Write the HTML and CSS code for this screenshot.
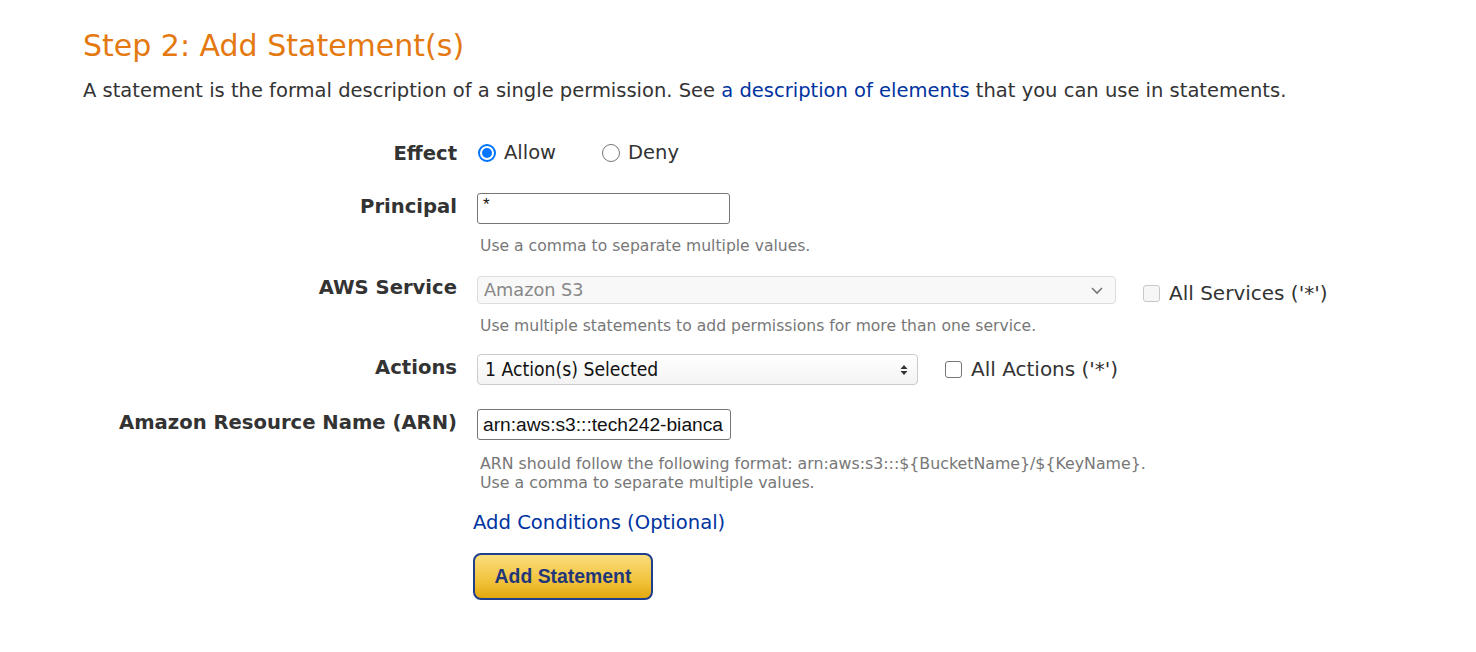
FILE: index.html
```html
<!DOCTYPE html>
<html>
<head>
<meta charset="utf-8">
<link rel="stylesheet" href="styles.css">
</head>
<body>
<div class="page">
  <h2 class="title">Step 2: Add Statement(s)</h2>
  <p class="intro">A statement is the formal description of a single permission. See <a href="#" class="link">a description of elements</a> that you can use in statements.</p>

  <div class="form">
    <div class="row row-effect">
      <div class="label label-effect h30">Effect</div>
      <div class="field">
        <div class="line h30">
          <label class="opt"><span class="radio checked"></span><span>Allow</span></label>
          <label class="opt opt-deny"><span class="radio"></span><span>Deny</span></label>
        </div>
      </div>
    </div>

    <div class="row row-principal">
      <div class="label h31">Principal</div>
      <div class="field">
        <div class="line h31"><div class="textbox tb-principal">*</div></div>
        <div class="hint hint-first">Use a comma to separate multiple values.</div>
      </div>
    </div>

    <div class="row row-service">
      <div class="label h28">AWS Service</div>
      <div class="field">
        <div class="line h28">
          <div class="select select-disabled">
            <span>Amazon S3</span>
            <svg class="chev" width="14" height="9" viewBox="0 0 14 9"><path d="M2 2 L7 7 L12 2" fill="none" stroke="#777" stroke-width="1.6"/></svg>
          </div>
          <label class="check-opt check-services"><span class="checkbox disabled"></span><span>All Services ('*')</span></label>
        </div>
        <div class="hint hint-first">Use multiple statements to add permissions for more than one service.</div>
      </div>
    </div>

    <div class="row row-actions">
      <div class="label h31">Actions</div>
      <div class="field">
        <div class="line h31">
          <div class="select select-actions">
            <span>1 Action(s) Selected</span>
            <svg class="updown" width="8" height="12" viewBox="0 0 8 12"><path d="M4 1 L7.5 5 L0.5 5 Z M4 11 L7.5 7 L0.5 7 Z" fill="#333"/></svg>
          </div>
          <label class="check-opt check-actions"><span class="checkbox"></span><span>All Actions ('*')</span></label>
        </div>
      </div>
    </div>

    <div class="row row-arn">
      <div class="label h31">Amazon Resource Name (ARN)</div>
      <div class="field">
        <div class="line h31"><div class="textbox tb-arn">arn:aws:s3:::tech242-bianca</div></div>
        <div class="hint hint-arn">ARN should follow the following format: arn:aws:s3:::${BucketName}/${KeyName}.<br>Use a comma to separate multiple values.</div>
      </div>
    </div>

    <div class="row row-cond">
      <div class="label"></div>
      <div class="field field-wide">
        <a href="#" class="link cond">Add Conditions (Optional)</a>
        <div class="btn">Add Statement</div>
      </div>
    </div>
  </div>
</div>
</body>
</html>
```

FILE: styles.css
```css
html, body {
  margin: 0;
  padding: 0;
  background: #ffffff;
}

body {
  font-family: "DejaVu Sans", Verdana, sans-serif;
  color: #333333;
}

.page {
  padding: 29px 0 0 83px;
}

.title {
  margin: 0;
  font-weight: normal;
  font-size: 30px;
  line-height: 34px;
  color: #e47911;
}

.intro {
  margin: 16px 0 0 0;
  font-size: 19.5px;
  line-height: 24px;
  color: #333333;
}

.link {
  color: #0033a0;
  text-decoration: none;
}

.form {
  margin-top: 35px;
}

.row {
  display: grid;
  grid-template-columns: 374px 1fr;
  column-gap: 20px;
}

.label {
  text-align: right;
  font-weight: bold;
  font-size: 19.6px;
  color: #333333;
  margin-top: -2px;
  white-space: nowrap;
}

.label-effect {
  margin-top: 1px;
}

.h30 { height: 30px; line-height: 30px; }
.h31 { height: 31px; line-height: 31px; }
.h28 { height: 28px; line-height: 28px; }

.line {
  display: flex;
  align-items: center;
}

.row-effect { margin-bottom: 24px; }
.row-principal { margin-bottom: 21px; }
.row-service { margin-bottom: 19px; }
.row-actions { margin-bottom: 24px; }
.row-arn { margin-bottom: 0; }

.opt {
  display: flex;
  align-items: center;
  font-size: 19.5px;
  color: #333333;
}

.opt-deny {
  margin-left: 45px;
}

.radio {
  width: 18px;
  height: 18px;
  box-sizing: border-box;
  border-radius: 50%;
  border: 1.5px solid #767676;
  background: #fff;
  margin: 0 8px 0 1px;
  position: relative;
}

.radio.checked {
  border: 2px solid #0075ff;
}

.radio.checked::after {
  content: "";
  position: absolute;
  left: 2px;
  top: 2px;
  width: 10px;
  height: 10px;
  border-radius: 50%;
  background: #0075ff;
}

.textbox {
  box-sizing: border-box;
  height: 31px;
  border: 1px solid #767676;
  border-radius: 3px;
  background: #fff;
  padding: 0 5px;
  font-family: "Liberation Sans", Arial, sans-serif;
  font-size: 19px;
  line-height: 29px;
  color: #111;
  white-space: nowrap;
  overflow: hidden;
}

.tb-principal {
  width: 253px;
  line-height: 22px;
  font-size: 17px;
}

.tb-arn {
  width: 254px;
  font-size: 19.2px;
}

.hint {
  font-size: 15.6px;
  color: #777777;
  padding-left: 3px;
}

.hint-first {
  margin-top: 13px;
  line-height: 18px;
}

.hint-arn {
  margin-top: 14px;
  line-height: 19px;
  font-size: 15.8px;
}

.select {
  box-sizing: border-box;
  display: flex;
  align-items: center;
  justify-content: space-between;
  border-radius: 4px;
  white-space: nowrap;
}

.select-disabled {
  width: 639px;
  height: 28px;
  border: 1px solid #dddddd;
  background: #f8f8f8;
  color: #888888;
  font-size: 17.7px;
  padding: 0 11px 0 6px;
}

.select-actions {
  width: 441px;
  height: 31px;
  border: 1px solid #cccccc;
  background: linear-gradient(#ffffff, #f3f3f3);
  color: #111;
  font-family: "DejaVu Sans Condensed", "DejaVu Sans", sans-serif;
  font-size: 19.2px;
  padding: 0 9px 0 7px;
}

.check-opt {
  display: flex;
  align-items: center;
  font-size: 20px;
  color: #333;
}

.check-services {
  margin-left: 27px;
  margin-top: 6px;
}

.check-actions {
  margin-left: 27px;
}

.checkbox {
  width: 17px;
  height: 17px;
  box-sizing: border-box;
  border: 1.5px solid #767676;
  border-radius: 3px;
  background: #fff;
  margin-right: 9px;
}

.checkbox.disabled {
  border-color: #c8c8c8;
  background: #f6f6f6;
}

.field-wide {
  margin-left: -4px;
}

.cond {
  display: block;
  margin-top: 19px;
  font-size: 19.6px;
  line-height: 24px;
}

.btn {
  margin-top: 18px;
  box-sizing: border-box;
  width: 180px;
  height: 47px;
  border: 2.5px solid #1f3f8c;
  border-radius: 8px;
  background: linear-gradient(#fbdd7c, #f2c33c 60%, #e3a90f);
  color: #22367a;
  font-family: "Liberation Sans", Arial, sans-serif;
  font-weight: bold;
  font-size: 19.4px;
  line-height: 42px;
  text-align: center;
}
```
